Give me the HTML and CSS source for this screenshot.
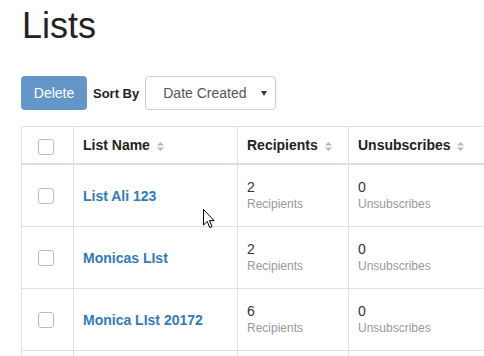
FILE: index.html
```html
<!DOCTYPE html>
<html lang="en">
<head>
    <meta charset="UTF-8">
    <meta name="viewport" content="width=device-width, initial-scale=1.0">
    <title>Lists</title>
    <link rel="stylesheet" href="styles.css">
</head>
<body>
    <div class="container">
        <h1 class="page-title">Lists</h1>

        <div class="toolbar">
            <button class="btn-delete">Delete</button>
            <span class="sort-label">Sort By</span>
            <div class="sort-select">
                <span>Date Created</span>
                <span class="caret"></span>
            </div>
        </div>

        <table class="lists-table">
            <colgroup>
                <col class="col-check">
                <col class="col-name">
                <col class="col-recip">
                <col class="col-unsub">
            </colgroup>
            <thead>
                <tr>
                    <th class="check-cell"><span class="checkbox"></span></th>
                    <th>List Name <svg class="sort-icon" viewBox="0 0 7 9" width="7" height="9"><path d="M0 3.6 L3.5 0 L7 3.6 Z M0 5.4 L7 5.4 L3.5 9 Z"/></svg></th>
                    <th>Recipients <svg class="sort-icon" viewBox="0 0 7 9" width="7" height="9"><path d="M0 3.6 L3.5 0 L7 3.6 Z M0 5.4 L7 5.4 L3.5 9 Z"/></svg></th>
                    <th>Unsubscribes <svg class="sort-icon" viewBox="0 0 7 9" width="7" height="9"><path d="M0 3.6 L3.5 0 L7 3.6 Z M0 5.4 L7 5.4 L3.5 9 Z"/></svg></th>
                </tr>
            </thead>
            <tbody>
                <tr>
                    <td class="check-cell"><span class="checkbox"></span></td>
                    <td><a href="#">List Ali 123</a></td>
                    <td><div class="count">2</div><div class="count-label">Recipients</div></td>
                    <td><div class="count">0</div><div class="count-label">Unsubscribes</div></td>
                </tr>
                <tr>
                    <td class="check-cell"><span class="checkbox"></span></td>
                    <td><a href="#">Monicas LIst</a></td>
                    <td><div class="count">2</div><div class="count-label">Recipients</div></td>
                    <td><div class="count">0</div><div class="count-label">Unsubscribes</div></td>
                </tr>
                <tr>
                    <td class="check-cell"><span class="checkbox"></span></td>
                    <td><a href="#">Monica LIst 20172</a></td>
                    <td><div class="count">6</div><div class="count-label">Recipients</div></td>
                    <td><div class="count">0</div><div class="count-label">Unsubscribes</div></td>
                </tr>
                <tr>
                    <td class="check-cell"></td>
                    <td></td>
                    <td></td>
                    <td></td>
                </tr>
            </tbody>
        </table>

        <!-- mouse pointer captured in the screenshot -->
        <svg class="cursor" viewBox="0 0 12 20" width="12" height="20">
            <path d="M0.5 0.5 L0.5 16 L4.2 12.4 L6.8 18.6 L9 17.6 L6.5 11.6 L11.2 11.6 Z" fill="#fff" stroke="#000" stroke-width="1"/>
        </svg>
    </div>
</body>
</html>
```

FILE: styles.css
```css
body {
    margin: 0;
    padding: 0;
    background: #fff;
    font-family: "Liberation Sans", Arial, sans-serif;
    color: #333;
    overflow: hidden;
}

.container {
    position: relative;
    padding-left: 21px;
}

.page-title {
    font-size: 36px;
    font-weight: normal;
    line-height: 40px;
    margin: 6px 0 30px 1px;
    color: #222;
}

/* toolbar */
.toolbar {
    display: flex;
    align-items: center;
    height: 34px;
}

.btn-delete {
    width: 66px;
    height: 34px;
    border: none;
    border-radius: 4px;
    background: #6496c8;
    color: #fff;
    font-family: inherit;
    font-size: 14px;
    padding: 0;
}

.sort-label {
    font-size: 13px;
    font-weight: bold;
    margin-left: 6px;
    color: #222;
}

.sort-select {
    display: flex;
    align-items: center;
    justify-content: space-between;
    box-sizing: border-box;
    width: 131px;
    height: 34px;
    margin-left: 6px;
    padding: 0 8px 0 17px;
    border: 1px solid #ccc;
    border-radius: 4px;
    font-size: 14px;
    color: #555;
}

.caret {
    width: 0;
    height: 0;
    border-left: 3px solid transparent;
    border-right: 3px solid transparent;
    border-top: 5px solid #333;
}

/* table */
.lists-table {
    margin-top: 16px;
    width: 463px;
    border-collapse: collapse;
    table-layout: fixed;
}

.col-check { width: 52px; }
.col-name { width: 164px; }
.col-recip { width: 111px; }
.col-unsub { width: 136px; }

.lists-table th,
.lists-table td {
    border: 1px solid #dde1e1;
    padding: 0 9px;
    text-align: left;
    vertical-align: middle;
}

.lists-table th {
    height: 36px;
    border-bottom-width: 2px;
    font-size: 14px;
    font-weight: bold;
    color: #222;
    white-space: nowrap;
}

.lists-table td {
    height: 61px;
}

.lists-table .check-cell {
    padding: 0 0 0 16px;
}

.checkbox {
    display: block;
    box-sizing: border-box;
    width: 16px;
    height: 16px;
    border: 1px solid #bbb;
    border-radius: 3px;
    background: #fff;
}

th .checkbox {
    margin-top: 3px;
}

.sort-icon {
    fill: #b8b8b8;
    margin-left: 3px;
    vertical-align: -1px;
}

.lists-table a {
    color: #337ab7;
    font-size: 14px;
    font-weight: bold;
    text-decoration: none;
}

.count {
    font-size: 14px;
    line-height: 17px;
    color: #333;
}

.count-label {
    font-size: 12px;
    line-height: 16px;
    color: #999;
}

.cursor {
    position: absolute;
    left: 203px;
    top: 203px;
}
```
